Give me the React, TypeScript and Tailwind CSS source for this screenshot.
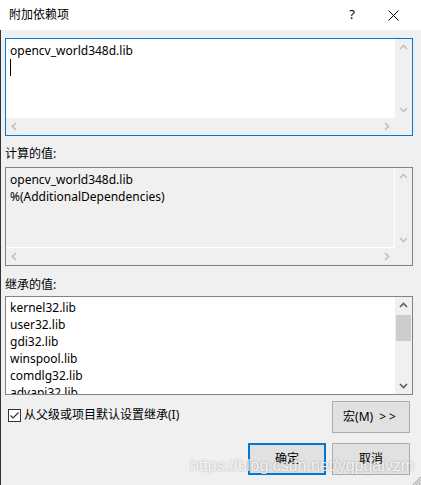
import type { ReactNode } from "react";

// Windows 10 style "附加依赖项" dialog.

type Dir = "up" | "down" | "left" | "right";

const chevronPaths: Record<Dir, string> = {
  up: "M1 6 L4.5 2.5 L8 6",
  down: "M1 3 L4.5 6.5 L8 3",
  left: "M6 1 L2.5 4.5 L6 8",
  right: "M3 1 L6.5 4.5 L3 8",
};

function Chevron({ dir, enabled }: { dir: Dir; enabled?: boolean }) {
  return (
    <svg width="9" height="9" viewBox="0 0 9 9" fill="none">
      <path d={chevronPaths[dir]} stroke={enabled ? "#606060" : "#c2c2c2"} strokeWidth="1.7" />
    </svg>
  );
}

function VScroll({ enabled, thumb }: { enabled?: boolean; thumb?: boolean }) {
  return (
    <div className="flex w-[17px] shrink-0 flex-col bg-[#f0f0f0]">
      <div className="grid h-[17px] place-items-center">
        <Chevron dir="up" enabled={enabled} />
      </div>
      <div className="flex-1">
        {thumb && <div className="mt-[1px] ml-[1px] h-[26px] w-[15px] bg-[#cdcdcd]" />}
      </div>
      <div className="grid h-[17px] place-items-center">
        <Chevron dir="down" enabled={enabled} />
      </div>
    </div>
  );
}

function HScroll() {
  return (
    <div className="flex h-[17px] shrink-0 bg-[#f0f0f0]">
      <div className="flex flex-1 items-center justify-between px-[4px]">
        <Chevron dir="left" />
        <Chevron dir="right" />
      </div>
      <div className="w-[17px]" />
    </div>
  );
}

function ListBox({
  border,
  bg,
  hscroll,
  enabled,
  thumb,
  children,
}: {
  border: string;
  bg: string;
  hscroll?: boolean;
  enabled?: boolean;
  thumb?: boolean;
  children: ReactNode;
}) {
  return (
    <div className={`flex h-[99px] w-[408px] flex-col border ${border}`}>
      <div className="flex min-h-0 flex-1">
        <div className={`min-w-0 flex-1 overflow-hidden border-r border-white pl-[4px] pt-[2px] leading-[17px] ${bg} ${hscroll ? "border-b" : ""}`}>
          {children}
        </div>
        <VScroll enabled={enabled} thumb={thumb} />
      </div>
      {hscroll && <HScroll />}
    </div>
  );
}

function Button({ children, primary }: { children: ReactNode; primary?: boolean }) {
  return (
    <div
      className={`flex h-[32px] w-[78px] items-center justify-center bg-[#e1e1e1] ${
        primary ? "border-2 border-[#0078d7]" : "border border-[#adadad]"
      }`}
    >
      {children}
    </div>
  );
}

export default function App() {
  const inherited = ["kernel32.lib", "user32.lib", "gdi32.lib", "winspool.lib", "comdlg32.lib", "advapi32.lib", "shell32.lib"];

  return (
    <div className="relative flex h-[485px] w-[421px] flex-col overflow-hidden bg-[#f0f0f0] font-['Noto_Sans','Noto_Sans_CJK_SC',sans-serif] text-[12px] text-black">
      {/* title bar */}
      <div className="flex h-[30px] shrink-0 items-center bg-white pl-[9px]">
        <span className="flex-1">附加依赖项</span>
        <span className="mr-[33px] text-[13px]">?</span>
        <svg width="11" height="11" viewBox="0 0 11 11" className="mr-[22px]">
          <path d="M0.5 0.5 L10.5 10.5 M10.5 0.5 L0.5 10.5" stroke="#000" strokeWidth="1" />
        </svg>
      </div>

      <div className="flex flex-1 flex-col border-l border-[#333] pl-[4px] pt-[8px]">
        <div className="flex h-[98px] w-[408px] flex-col border border-[#0078d7]">
          <div className="flex min-h-0 flex-1">
            <div className="min-w-0 flex-1 bg-white pl-[4px] pt-[3px] leading-[17px]">
              <div>opencv_world348d.lib</div>
              <div className="h-[17px] w-px bg-black" />
            </div>
            <VScroll />
          </div>
          <HScroll />
        </div>

        <div className="mt-[9px] mb-[5px] leading-[17px]">计算的值:</div>
        <ListBox border="border-[#828282]" bg="bg-[#f0f0f0]" hscroll>
          <div className="pt-[1px]">opencv_world348d.lib</div>
          <div>%(AdditionalDependencies)</div>
        </ListBox>

        <div className="mt-[10px] mb-[3px] leading-[17px]">继承的值:</div>
        <ListBox border="border-[#828282]" bg="bg-white" enabled thumb>
          {inherited.map((lib) => (
            <div key={lib}>{lib}</div>
          ))}
        </ListBox>

        <div className="mt-[6px] flex w-[408px] items-start justify-between pr-[3px]">
          <div className="mt-[5px] flex items-center gap-[2px] pl-[3px] leading-[18px]">
            <svg width="13" height="13" viewBox="0 0 13 13">
              <rect x="0.5" y="0.5" width="12" height="12" fill="#fff" stroke="#333" />
              <path d="M2.5 6.5 L5 9 L10.5 3.5" fill="none" stroke="#333" strokeWidth="1.2" />
            </svg>
            <span className="ml-[1px]">从父级或项目默认设置继承(I)</span>
          </div>
          <Button>
            宏(M)<span className="ml-[6px] tracking-[3px]">&gt;&gt;</span>
          </Button>
        </div>

        <div className="mt-[10px] flex w-[408px] justify-end gap-[6px] pr-[3px]">
          <Button primary>确定</Button>
          <Button>取消</Button>
        </div>
      </div>

      {/* resize grip */}
      <svg width="10" height="10" viewBox="0 0 10 10" className="absolute right-0 bottom-0">
        <path d="M10 2 L2 10 M10 5 L5 10 M10 8 L8 10" stroke="#b0b0b0" strokeWidth="1.2" />
      </svg>

      {/* watermark */}
      <div className="pointer-events-none absolute top-[454px] left-[190px] font-['Liberation_Sans',Arial,sans-serif] text-[16px] text-white/85 [text-shadow:0_0_2px_rgba(0,0,0,0.35)]">
        https://blog.csdn.net/yqpgaivzm
      </div>
    </div>
  );
}
